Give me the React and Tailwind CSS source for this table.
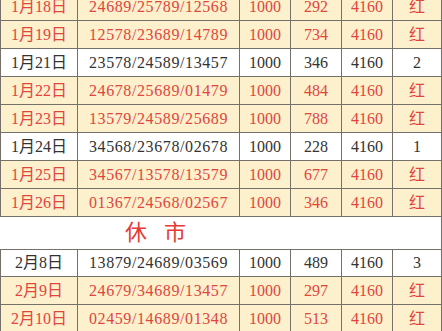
import React from "react";

const rowsA = [
  { d: "1月18日", n: "24689/25789/12568", a: "1000", b: "292", c: "4160", r: "红", hot: true },
  { d: "1月19日", n: "12578/23689/14789", a: "1000", b: "734", c: "4160", r: "红", hot: true },
  { d: "1月21日", n: "23578/24589/13457", a: "1000", b: "346", c: "4160", r: "2", hot: false },
  { d: "1月22日", n: "24678/25689/01479", a: "1000", b: "484", c: "4160", r: "红", hot: true },
  { d: "1月23日", n: "13579/24589/25689", a: "1000", b: "788", c: "4160", r: "红", hot: true },
  { d: "1月24日", n: "34568/23678/02678", a: "1000", b: "228", c: "4160", r: "1", hot: false },
  { d: "1月25日", n: "34567/13578/13579", a: "1000", b: "677", c: "4160", r: "红", hot: true },
  { d: "1月26日", n: "01367/24568/02567", a: "1000", b: "346", c: "4160", r: "红", hot: true },
];

const rowsB = [
  { d: "2月8日", n: "13879/24689/03569", a: "1000", b: "489", c: "4160", r: "3", hot: false },
  { d: "2月9日", n: "24679/34689/13457", a: "1000", b: "297", c: "4160", r: "红", hot: true },
  { d: "2月10日", n: "02459/14689/01348", a: "1000", b: "513", c: "4160", r: "红", hot: true },
];

const font = { fontFamily: '"Liberation Serif", "Noto Sans CJK SC", serif' };

function Row({ row, top }) {
  const tone = row.hot ? "bg-[#fdf0cd] text-[#e0463d]" : "bg-white text-[#333333]";
  const cell = "flex items-center justify-center border-r border-[#76706a]";
  return (
    <div
      className={`grid grid-cols-[77px_162px_51px_51px_51px_49px] h-[28px] border-l border-b border-[#76706a] text-[16px] leading-none ${tone} ${top ? "border-t" : ""}`}
    >
      <div className={cell}>{row.d}</div>
      <div className={`${cell} tracking-[0.6px]`}>{row.n}</div>
      <div className={cell}>{row.a}</div>
      <div className={cell}>{row.b}</div>
      <div className={cell}>{row.c}</div>
      <div className={cell}>{row.r}</div>
    </div>
  );
}

export default function App() {
  return (
    <div className="w-[442px] h-[331px] overflow-hidden bg-white" style={font}>
      <div className="flex flex-col -mt-[7px]">
        {rowsA.map((row) => (
          <Row key={row.d} row={row} />
        ))}
        <div className="h-[32px] flex items-center border-r border-[#76706a] pl-[125px] gap-[17px] text-[22px] text-[#e53a35] leading-none">
          <span>休</span>
          <span>市</span>
        </div>
        {rowsB.map((row, i) => (
          <Row key={row.d} row={row} top={i === 0} />
        ))}
      </div>
    </div>
  );
}
